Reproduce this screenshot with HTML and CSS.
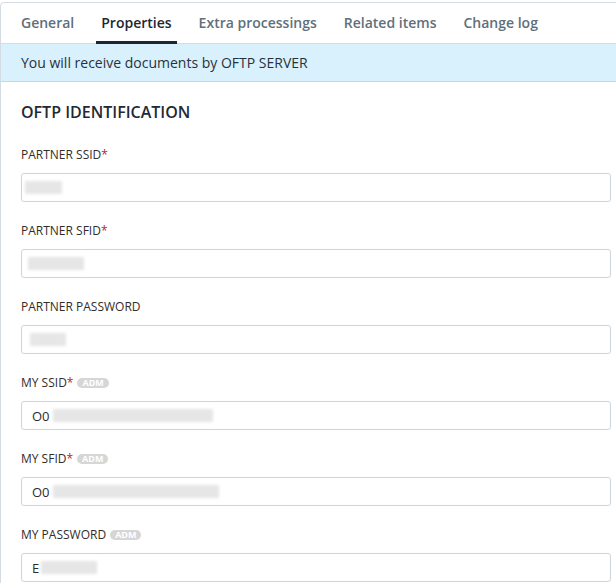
FILE: index.html
```html
<!DOCTYPE html>
<html lang="en">

<head>
    <meta charset="UTF-8">
    <meta name="viewport" content="width=device-width, initial-scale=1.0">
    <title>Partner properties</title>
    <link rel="stylesheet" href="styles.css">
</head>

<body>
    <div class="panel">
        <nav class="tabs">
            <a class="tab">General</a>
            <a class="tab active">Properties</a>
            <a class="tab">Extra processings</a>
            <a class="tab">Related items</a>
            <a class="tab">Change log</a>
        </nav>

        <div class="notice">You will receive documents by OFTP SERVER</div>

        <section class="form">
            <h2 class="section-title">OFTP IDENTIFICATION</h2>

            <div class="field">
                <label class="field-label">PARTNER SSID<span class="req">*</span></label>
                <div class="input"><span class="redacted r-ssid"></span></div>
            </div>

            <div class="field">
                <label class="field-label">PARTNER SFID<span class="req">*</span></label>
                <div class="input"><span class="redacted r-sfid"></span></div>
            </div>

            <div class="field">
                <label class="field-label">PARTNER PASSWORD</label>
                <div class="input"><span class="redacted r-pass"></span></div>
            </div>

            <div class="field">
                <label class="field-label">MY SSID<span class="req">*</span><span class="badge">ADM</span></label>
                <div class="input">O0<span class="redacted r-long"></span></div>
            </div>

            <div class="field">
                <label class="field-label">MY SFID<span class="req">*</span><span class="badge">ADM</span></label>
                <div class="input">O0<span class="redacted r-longer"></span></div>
            </div>

            <div class="field">
                <label class="field-label">MY PASSWORD<span class="badge">ADM</span></label>
                <div class="input">E<span class="redacted r-mypass"></span></div>
            </div>
        </section>
    </div>
</body>

</html>
```

FILE: styles.css
```css
body {
    font-family: "Open Sans", "Noto Sans", sans-serif;
    margin: 0;
    padding-top: 2px;
    background-color: white;
    overflow: hidden;
}

.panel {
    width: 632px;
    border: 1px solid #d3dce3;
    border-radius: 4px;
    background: white;
}

/* Tabs */
.tabs {
    display: flex;
    gap: 17px;
    padding: 0 15px;
    border-bottom: 1px solid #d3dce3;
}

.tab {
    padding: 10px 5px 8px;
    line-height: 20px;
    font-size: 14px;
    font-weight: 600;
    color: #5f6f7c;
    border-bottom: 3px solid transparent;
    margin-bottom: -1px;
    cursor: pointer;
}

.tab.active {
    color: #1d2731;
    border-bottom-color: #1d2731;
}

.notice {
    background-color: #d9f1fc;
    border-bottom: 1px solid #c5d7e2;
    padding: 9px 20px;
    line-height: 19px;
    font-size: 14px;
    color: #27323c;
}

/* Form */
.form {
    padding: 19px 20px 0;
}

.section-title {
    margin: 0;
    font-size: 16px;
    line-height: 22px;
    font-weight: 600;
    color: #1f2a33;
}

.field {
    padding-bottom: 21px;
}

.field:first-of-type {
    margin-top: 24px;
}

.field-label {
    display: flex;
    align-items: center;
    line-height: 16px;
    font-size: 12px;
    font-weight: 500;
    color: #332d29;
    margin-bottom: 10px;
}

.req {
    color: #c0212f;
}

.badge {
    margin-left: 4px;
    background-color: #d6d6d6;
    color: white;
    font-size: 9px;
    font-weight: 700;
    line-height: 10px;
    padding: 0 5px;
    border-radius: 5px;
}

.input {
    width: 590px;
    height: 29px;
    box-sizing: border-box;
    border: 1px solid #cdd5dc;
    border-radius: 3px;
    padding: 0 10px;
    display: flex;
    align-items: center;
    font-size: 13px;
    color: #2b2b2b;
}

/* blurred values */
.redacted {
    display: inline-block;
    height: 13px;
    background-color: #e6e6e6;
    filter: blur(1.5px);
}

.r-ssid { width: 37px; margin-left: -7px; }
.r-sfid { width: 56px; margin-left: -4px; }
.r-pass { width: 36px; margin-left: -2px; }
.r-long { width: 160px; margin-left: 3px; }
.r-longer { width: 166px; margin-left: 3px; }
.r-mypass { width: 56px; margin-left: 2px; }
```
